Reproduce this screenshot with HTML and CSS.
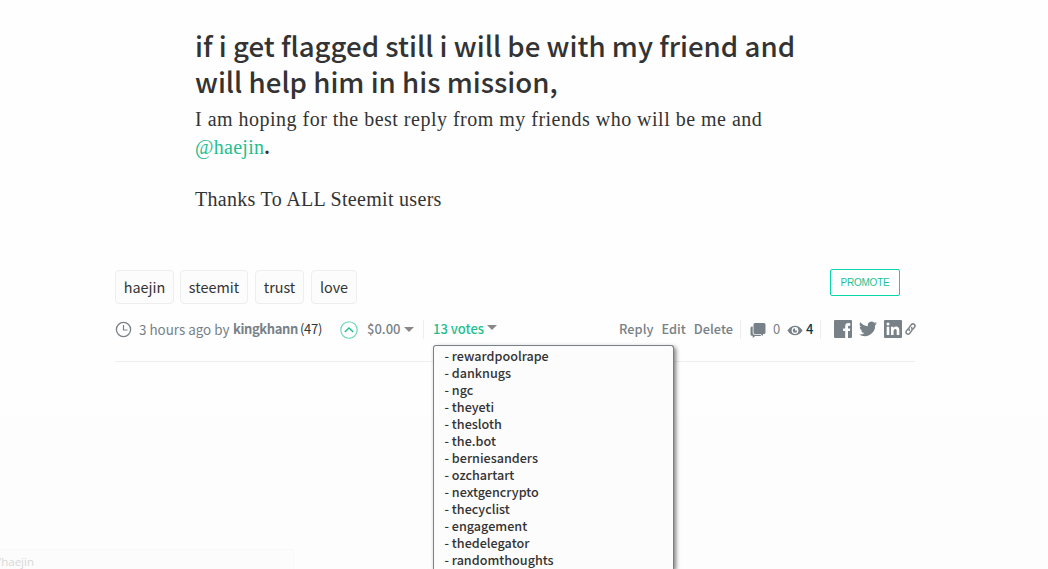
FILE: index.html
```html
<!DOCTYPE html>
<html lang="en">
<head>
    <meta charset="UTF-8">
    <meta name="viewport" content="width=device-width, initial-scale=1.0">
    <title>Steemit</title>
    <link rel="stylesheet" href="styles.css">
</head>
<body>
    <div class="post">
        <article class="post-body">
            <h1>if i get flagged still i will be with my friend and<br>will help him in his mission,</h1>
            <p>I am hoping for the best reply from my friends who will be me and<br><a class="mention" href="#">@haejin</a><b>.</b></p>
            <p class="thanks">Thanks To ALL Steemit users</p>
        </article>

        <div class="tag-row">
            <a class="tag tag-haejin" href="#">haejin</a>
            <a class="tag tag-steemit" href="#">steemit</a>
            <a class="tag tag-trust" href="#">trust</a>
            <a class="tag tag-love" href="#">love</a>
            <button class="promote">PROMOTE</button>
        </div>

        <div class="footer-row">
            <svg class="clock" width="17" height="17" viewBox="0 0 17 17"><circle cx="8.5" cy="8.5" r="7.1" fill="none" stroke="#788187" stroke-width="1.3"/><path d="M8.5 4V9H12.5" fill="none" stroke="#788187" stroke-width="1.2"/></svg>
            <span class="time">3 hours ago by</span>
            <b class="author">kingkhann</b>
            <span class="reputation">(47)</span>
            <svg class="upvote" width="18" height="18" viewBox="0 0 18 18"><circle cx="9" cy="9" r="8.2" fill="none" stroke="#5fd3ae" stroke-width="1.1"/><path d="M4.8 11L9 6.9L13.2 11" fill="none" stroke="#1fbf8f" stroke-width="1.4"/></svg>
            <span class="payout">$0.00</span>
            <i class="caret"></i>
            <div class="votes">
                <span class="vote-count">13 votes</span>
                <i class="caret caret-votes"></i>
                <ul class="vote-menu">
                    <li>- rewardpoolrape</li>
                    <li>- danknugs</li>
                    <li>- ngc</li>
                    <li>- theyeti</li>
                    <li>- thesloth</li>
                    <li>- the.bot</li>
                    <li>- berniesanders</li>
                    <li>- ozchartart</li>
                    <li>- nextgencrypto</li>
                    <li>- thecyclist</li>
                    <li>- engagement</li>
                    <li>- thedelegator</li>
                    <li>- randomthoughts</li>
                </ul>
            </div>
            <div class="actions">
                <a href="#">Reply</a>
                <a href="#">Edit</a>
                <a href="#">Delete</a>
            </div>
            <div class="stats">
                <svg class="chat" width="16" height="15" viewBox="0 0 16 15"><path d="M5 0H14Q15.5 0 15.5 1.5V9.5Q15.5 11 14 11H13V13L10.5 11H5Q3.5 11 3.5 9.5V1.5Q3.5 0 5 0Z" fill="#788187"/><path d="M2.7 3.5H1.8Q.5 3.8 .5 5V11.2Q.5 12.7 2 12.7H2.7V15L5.2 12.9H11.5L10.2 11.8H4.4Q2.7 11.8 2.7 10Z" fill="#788187"/></svg>
                <span class="comments">0</span>
                <svg class="eye" width="16" height="11" viewBox="0 0 16 11"><path fill-rule="evenodd" d="M.4 5.5Q3.5 .7 8 .7T15.6 5.5Q12.5 10.3 8 10.3T.4 5.5ZM8 2.1A3.4 3.4 0 1 0 8 8.9A3.4 3.4 0 1 0 8 2.1Z" fill="#788187"/><path d="M8 3.3A2.2 2.2 0 1 0 10.2 5.5H8Z" fill="#788187"/></svg>
                <span class="views">4</span>
            </div>
            <div class="share">
                <svg width="18" height="18" viewBox="0 0 18 18"><path fill="#788187" d="M1 0H17Q18 0 18 1V17Q18 18 17 18H14V11.1H15.9L16.2 8.5H14V7Q14 5.8 15.2 5.8H16.3V3.3Q15.5 3.1 14.4 3.1Q11.2 3.1 11.2 6.4V8.5H9.1V11.1H11.2V18H1Q0 18 0 17V1Q0 0 1 0Z"/></svg>
                <svg class="twitter" width="18" height="16" viewBox="0 0 24 20"><path fill="#788187" d="M24 2.4a10 10 0 0 1-2.8.8A5 5 0 0 0 23.3.5a10 10 0 0 1-3.1 1.2A4.9 4.9 0 0 0 11.8 6.2 14 14 0 0 1 1.7 1a4.9 4.9 0 0 0 1.5 6.6A5 5 0 0 1 1 7a4.9 4.9 0 0 0 3.9 4.8 5 5 0 0 1-2.2.1 4.9 4.9 0 0 0 4.6 3.4A10 10 0 0 1 0 17.4 14 14 0 0 0 21.5 4.9 10 10 0 0 0 24 2.4Z"/></svg>
                <svg class="linkedin" width="18" height="18" viewBox="0 0 18 18"><rect width="18" height="18" rx="1" fill="#788187"/><path fill="#fff" d="M2.7 6.8H5.3V15H2.7ZM7 6.8H9.5V8Q10.4 6.6 12.1 6.6Q15.3 6.6 15.3 10.2V15H12.7V10.7Q12.7 8.9 11.3 8.9T9.6 10.7V15H7Z"/><circle cx="4" cy="4" r="1.5" fill="#fff"/></svg>
                <svg class="link" width="11" height="14" viewBox="0 0 12 14"><g fill="none" stroke="#788187" stroke-width="1.6" stroke-linecap="round"><path d="M4.8 8.5Q3.5 6.5 5 4.7L7 2.2Q8.5 .7 10.1 1.9Q11.7 3.2 10.4 5L8.8 7"/><path d="M7.2 5.5Q8.5 7.5 7 9.3L5 11.8Q3.5 13.3 1.9 12.1Q.3 10.8 1.6 9L3.2 7"/></g></svg>
            </div>
        </div>
    </div>
    <div class="page-lower"></div>
    <div class="status-bar">/haejin</div>
</body>
</html>
```

FILE: styles.css
```css
* {
    box-sizing: border-box;
}

body {
    margin: 0;
    height: 569px;
    overflow: hidden;
    display: flex;
    flex-direction: column;
    background-color: #fefefe;
    color: #333;
    font-family: "Noto Sans CJK SC", "Noto Sans", sans-serif;
}

a {
    color: inherit;
    text-decoration: none;
}

svg {
    display: block;
    flex: none;
}

/* Post text */
.post {
    width: 800px;
    height: 362px;
    margin-left: 115px;
    border-bottom: 1px solid #eee;
    flex: none;
}

.post-body {
    height: 269px;
    padding: 27px 0 0 80px;
    white-space: nowrap;
}

h1 {
    margin: 0;
    font-size: 27.65px;
    font-weight: 500;
    line-height: 36px;
}

p {
    margin: 6px 0 0;
    font-family: "Liberation Serif", serif;
    font-size: 20px;
    line-height: 28px;
    letter-spacing: 0.49px;
}

.thanks {
    margin-top: 24px;
    letter-spacing: 0.3px;
}

.mention {
    color: #1fbf8f;
    letter-spacing: 0.3px;
}

/* Tags */
.tag-row {
    display: flex;
    height: 35px;
    gap: 6px;
}

.tag {
    height: 34px;
    margin-top: 1px;
    border: 1px solid #eee;
    border-radius: 4px;
    background-color: #fcfcfc;
    font-size: 14.4px;
    line-height: 31px;
    text-align: center;
}

.tag-haejin {
    width: 59px;
}

.tag-steemit {
    width: 68px;
}

.tag-trust {
    width: 49px;
    margin-left: 1px;
}

.tag-love {
    width: 46px;
    margin-left: 1px;
}

.promote {
    width: 70px;
    height: 27px;
    margin: 0 15px 0 auto;
    padding: 0;
    border: 1px solid #06d6a9;
    border-radius: 2px;
    background-color: #fff;
    color: #1fbf8f;
    font-family: "Liberation Sans", sans-serif;
    font-size: 10px;
    letter-spacing: -0.2px;
}

/* Meta line under the post */
.footer-row {
    display: flex;
    align-items: center;
    height: 50px;
    color: #788187;
    font-size: 13px;
    line-height: 20px;
    white-space: nowrap;
}

.clock {
    margin-top: 1px;
}

.time {
    margin-left: 7px;
    width: 94px;
    font-size: 13.4px;
}

.author {
    width: 67px;
    letter-spacing: -0.4px;
}

.reputation {
    width: 23px;
    color: #333;
    letter-spacing: -0.3px;
}

.upvote {
    margin-left: 17px;
    margin-top: 2px;
}

.payout {
    margin-left: 9px;
    width: 37px;
    font-weight: 500;
}

.caret {
    border: 5px solid transparent;
    border-top-color: #888;
    border-bottom: 0;
}

.votes {
    position: relative;
    display: flex;
    align-items: center;
    height: 19px;
    margin-left: 9px;
    padding-left: 9px;
    border-left: 1px solid #eee;
}

.vote-count {
    width: 54px;
    color: #1fbf8f;
    font-weight: 500;
}

.caret-votes {
    margin-top: -4px;
}

.vote-menu {
    position: absolute;
    top: 25px;
    left: 9px;
    width: 241px;
    height: 224px;
    margin: 0;
    padding: 1px 10.5px 0;
    border: 1px solid #788187;
    border-bottom: 0;
    border-radius: 3px 3px 0 0;
    background-color: #fcfcfc;
    box-shadow: 2px 2px 4px rgba(0, 0, 0, 0.5);
    color: #333;
    font-size: 12.6px;
    font-weight: 500;
    line-height: 17px;
    list-style: none;
}

.actions {
    display: flex;
    gap: 8px;
    margin-left: auto;
    font-size: 12.8px;
    font-weight: 500;
}

.stats {
    display: flex;
    align-items: center;
    height: 19px;
    margin-left: 7px;
    padding: 0 6px 0 9px;
    border-left: 1px solid #eee;
    border-right: 1px solid #eee;
}

.chat {
    margin-top: 3px;
}

.comments {
    width: 7px;
    margin-left: 7px;
}

.eye {
    margin-left: 7px;
    margin-top: 3px;
}

.views {
    width: 8px;
    margin-left: 3px;
    color: #004050;
    font-weight: 500;
}

.share {
    display: flex;
    align-items: center;
    margin-left: 13px;
    margin-right: -1px;
}

.twitter,
.linkedin {
    margin-left: 7px;
}

.link {
    margin-left: 3px;
}

.page-lower {
    flex: 1;
    margin-top: 55px;
    background-color: #fdfdfd;
}

/* Browser link bubble, fading out */
.status-bar {
    position: absolute;
    left: -1px;
    bottom: 0;
    width: 295px;
    height: 20px;
    padding-top: 4px;
    border: 1px solid #f8f8f8;
    border-bottom: 0;
    border-radius: 0 4px 0 0;
    background-color: #fcfcfc;
    color: #d8d8d8;
    font-family: "Open Sans", sans-serif;
    font-size: 11.5px;
    line-height: 15px;
    text-indent: -3px;
}
```
